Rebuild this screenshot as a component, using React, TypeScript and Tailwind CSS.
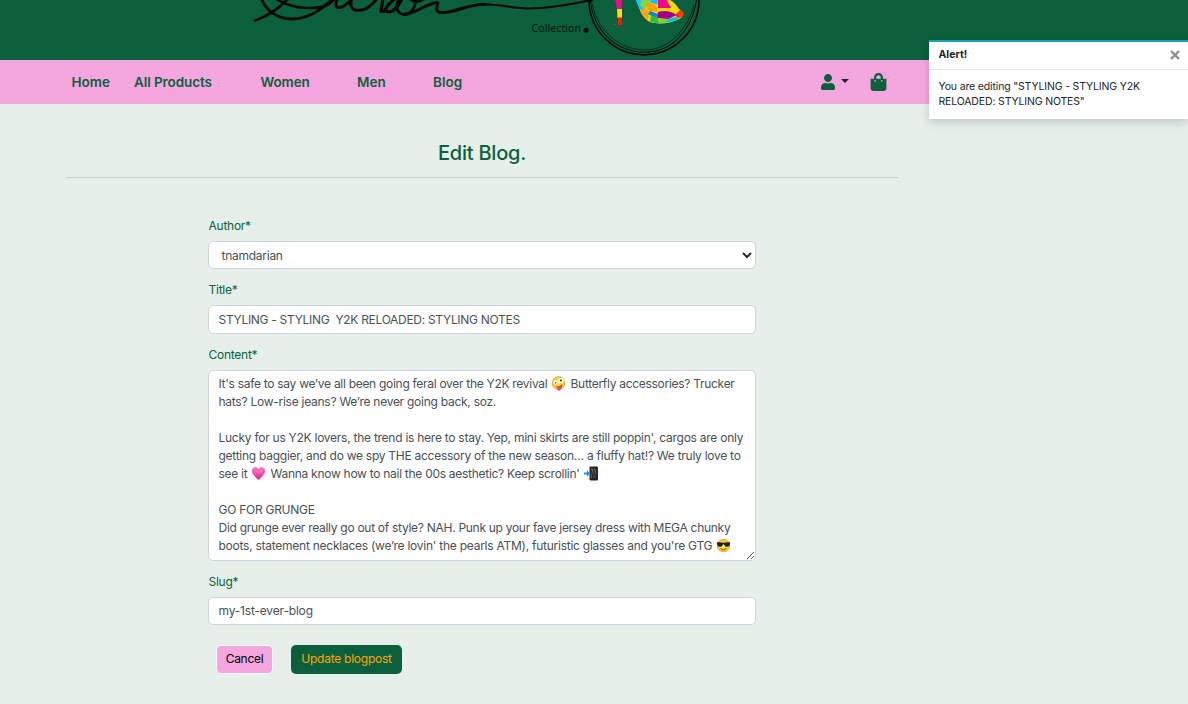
import React from "react";
import { FaUser, FaShoppingBag } from "react-icons/fa";

function Logo() {
  return (
    <svg width="460" height="60" viewBox="250 0 460 60" className="block" fill="none" stroke="#050805" strokeLinecap="round" strokeLinejoin="round">
      <path d="M255 20.500C266 17 277 10 288-1M261-2C266 11 278 19 292 19C308 19 321 11 334-3" strokeWidth="2.800" />
      <path d="M275-2C285 5 297 8 309 8C322 8 330 6 336-3" strokeWidth="2.700" />
      <path d="M338-2C334 5 336 8 340 7.500C345 7 349 2 352-2C349 6 352 10.500 358 10.500C367 10.500 374 3 378-3" strokeWidth="3" />
      <path d="M383-2L381 11.500M384 11.500C387 6 391 1 396-2C386 5 383 12 389 12C395 12 399 4 402-1" strokeWidth="3.200" />
      <path d="M399-2C395 7 397 14.500 405 14.500C412 14 417 5 415-2M410-1C414 3 420 2 424-1" strokeWidth="2.800" />
      <path d="M405 14C417 13 423 5 437 2.500C441 2 431 12 442 12.500C455 13 468 4.500 485 4.200" strokeWidth="2.800" />
      <path d="M448 12C461 8 470 4.500 484 4.200C502 4.500 514 8.500 531 8.500C555 8 570 4 592 0" strokeWidth="2.100" />
      <circle cx="644" cy="-.2" r="55" strokeWidth="1.700" />
      <path d="M590-2C593 31 616 52.200 645 52.200C673 52.200 693 29 697-3" strokeWidth="1" />
      <path d="M591-2C596 32 620 50 646 50C671 49 688 28 694 5" strokeWidth=".6" />
      <circle cx="586" cy="30.200" r="2.500" fill="#050805" stroke="none" />
      <text x="531.500" y="31.500" textLength="49.500" fontSize="10.500" fontFamily="'Noto Sans', sans-serif" fill="#07150e" stroke="none">Collection</text>
      <g stroke="none">
        <path d="M615-1H622V9H617Z" fill="#f0078c" />
        <path d="M617 9H622V18H617.500Z" fill="#ffdf00" />
        <path d="M617.500 17.500H622L621.500 25H618Z" fill="#f21b08" />
        <path d="M636-1C639 9 643 19 650 22C659 25.500 676 22 682 17C685 12 682 12 679 9C676 4 672 0 667-1Z" fill="#ffd800" />
        <path d="M635-1H642L641 5L646 10L641 11Z" fill="#14c4fb" />
        <path d="M642-1H650L648 6L644 9L640 4Z" fill="#86d23f" />
        <path d="M640 10L646 8L649 12L648 20Q642 17 640 10Z" fill="#ffa61c" />
        <path d="M649 2Q656 4 658 12L650 11L646 6Z" fill="#ffa000" />
        <path d="M650-1H658L657 5L650 2Z" fill="#13c4ef" />
        <path d="M650 11L658 14L656 18L648 14Z" fill="#0587d4" />
        <path d="M658-1H666L671 8L658 8Z" fill="#f0078c" />
        <path d="M658 12Q667 9 677 15L668 19L657 18Z" fill="#a0008d" />
        <path d="M651 15L658 18L659 23.500Q654 23 650 21.500Z" fill="#25bd50" />
        <path d="M659 19L668 19L678 19Q670 24 659 23.500Z" fill="#7dce42" />
        <path d="M668 19L679 16L677 20Q672 22 667 22Z" fill="#15b9ed" />
        <path d="M675 15L680 10L684 13L682 17L678 18Z" fill="#f33710" />
      </g>
    </svg>
  );
}

function Emoji({ kind }: { kind: "zany" | "heart" | "phone" | "cool" }) {
  return (
    <svg width="15" height="15" viewBox="0 0 15 15" className="mx-px inline-block align-[-3px]">
      <defs>
        <radialGradient id="face"><stop stopColor="#ffe74d" /><stop offset=".7" stopColor="#ffd33a" /><stop offset="1" stopColor="#eba023" /></radialGradient>
        <linearGradient id="pink" x2="0" y2="1"><stop stopColor="#ff9cd0" /><stop offset="1" stopColor="#df1185" /></linearGradient>
      </defs>
      {kind === "zany" && <g><circle cx="7.5" cy="7" r="6.700" fill="url(#face)" /><circle cx="4.500" cy="6.500" r="2" fill="#fff" /><circle cx="10" cy="4.500" r="2.700" fill="#fff" /><circle cx="4.600" cy="6.800" r=".8" fill="#543310" /><circle cx="10" cy="4.500" r="1.100" fill="#543310" /><path d="M4.500 10Q9 11 11.500 8Q11 12 8 12Z" fill="#69350b" /><path d="M5.500 10.500Q8.500 9.500 10.500 11Q10.500 14.200 7.500 15Q5.500 13 5.500 10.500Z" fill="#f44c7a" /></g>}
      {kind === "heart" && <g><path d="M7.500 14C4 10.500.7 8 .7 4.500C.7.800 5.500-.3 7.500 3C9.500-.3 14.300.8 14.300 4.500C14.300 8 11 10.500 7.500 14Z" fill="url(#pink)" /><path d="M3 7C1 2 6 1 7.500 5C9 1 14 2 12 7" fill="none" stroke="#f04da8" strokeWidth="1" /></g>}
      {kind === "phone" && <g><rect x="5.500" y=".5" width="8.500" height="14" rx="1" fill="#222629" /><path d="M7 2.500H12.500V12H7Z" fill="#303236" /><path d="M7 3H8M10 3H11M8 6H9M11 7H12M7 9H8M10 11H11" stroke="#eb5144" /><path d="M8 4H9M11 5H12M7 11H8" stroke="#4ac776" /><path d="M0 6.500H3V4.500L6.500 7.500L3 10.500V8.500H0Z" fill="#1792f4" /></g>}
      {kind === "cool" && <g><circle cx="7.500" cy="7.500" r="6.700" fill="url(#face)" /><path d="M.6 4.500Q4 3.800 7.500 4.800Q11 3.800 14.400 4.500L13.500 7.500Q12 9.500 9.500 8.500L7.500 6L5.500 8.500Q3 9.500 1.500 7.500Z" fill="#18232a" /><path d="M4.500 10.500Q7.500 13 10.500 10.500" stroke="#8b4d12" strokeWidth="1" fill="none" /></g>}
    </svg>
  );
}

const field = "rounded-[5px] border border-[#ced4da] bg-white text-[#495057]";
const label = "block h-[18px] pl-[0.5px] text-[12px] leading-[18px] tracking-[-0.25px] text-[#0c5f3b]";

export default function App() {
  return (
    <div className="relative h-[704px] w-[1188px] overflow-hidden bg-[#e6efea] font-['Inter',sans-serif] text-[12px]">
      <header className="h-[60px] bg-[#0c5f3b] pl-[250px]"><Logo /></header>
      <nav className="flex h-11 items-center bg-[#f4a6de] pl-[71.5px] text-[13.5px] font-semibold text-[#0c5f3b]">
        <a className="w-[62.5px] whitespace-nowrap">Home</a>
        <a className="w-[126.5px] tracking-[-0.08px] whitespace-nowrap">All Products</a>
        <a className="w-[96.5px] tracking-[-0.1px]">Women</a>
        <a className="w-[76px]">Men</a>
        <a className="w-[388px]">Blog</a>
        <FaUser className="h-4 w-[14px]" />
        <svg width="8" height="4" viewBox="0 0 8 4" className="mb-[2px] ml-[6px]"><path d="M0 0H8L4 4Z" fill="#212529" /></svg>
        <FaShoppingBag className="ml-[21px] h-[18px] w-[17px]" />
      </nav>

      <main className="ml-[66px] w-[832px]">
        <h1 className="flex h-[74px] items-end justify-center border-b border-[#cad2cd] pb-[9px] text-[20px] leading-[30px] font-medium tracking-[-0.22px] text-[#0c5f3b]">Edit Blog.</h1>
        <form className="ml-[142px] w-[548px] pt-[39px]">
          <label className={label}>Author*</label>
          <div className={`${field} mt-[6px] flex h-7 items-center justify-between pr-[3px] pl-3`}>
            <span className="pt-[2px] pl-[0.5px] tracking-[-0.26px]">tnamdarian</span>
            <svg width="10" height="7" viewBox="0 0 10 7" fill="none" stroke="#242a2d" strokeWidth="2"><path d="M1 1L5 5L9 1" /></svg>
          </div>
          <label className={`${label} mt-3`}>Title*</label>
          <div className={`${field} mt-[6px] flex h-[29px] items-center pl-[9.5px] tracking-[-0.3px] whitespace-pre`}>STYLING - STYLING  Y2K RELOADED: STYLING NOTES</div>
          <label className={`${label} mt-3`}>Content*</label>
          <div className={`${field} relative mt-[6px] h-[191px] pt-[4px] pl-[9.5px] leading-[18px] whitespace-pre`}>
            <p className="h-[18px] tracking-[-0.29px]">It's safe to say we’ve all been going feral over the Y2K revival <Emoji kind="zany" /> Butterfly accessories? Trucker</p>
            <p className="h-[36px] tracking-[-0.26px]">hats? Low-rise jeans? We’re never going back, soz.</p>
            <p className="h-[18px] tracking-[-0.255px]">Lucky for us Y2K lovers, the trend is here to stay. Yep, mini skirts are still poppin', cargos are only</p>
            <p className="h-[18px] tracking-[-0.265px]">getting baggier, and do we spy THE accessory of the new season… a fluffy hat!? We truly love to</p>
            <p className="h-[36px] tracking-[-0.28px]">see it <Emoji kind="heart" /> Wanna know how to nail the 00s aesthetic? Keep scrollin' <Emoji kind="phone" /></p>
            <p className="h-[18px] tracking-[-0.27px]">GO FOR GRUNGE</p>
            <p className="h-[18px] tracking-[-0.285px]">Did grunge ever really go out of style? NAH. Punk up your fave jersey dress with MEGA chunky</p>
            <p className="h-[18px] tracking-[-0.25px]">boots, statement necklaces (we’re lovin' the pearls ATM), futuristic glasses and you're GTG <Emoji kind="cool" /></p>
            <svg className="absolute right-0 bottom-0" width="9" height="9" stroke="#555" strokeWidth="1"><path d="M1 8L8 1M5 8L8 5" /></svg>
          </div>
          <label className={`${label} mt-3`}>Slug*</label>
          <div className={`${field} mt-[6px] flex h-7 items-center pl-[9.5px] tracking-[-0.18px]`}>my-1st-ever-blog</div>
          <div className="mt-5 flex items-center pl-2">
            <button type="button" className="h-[29px] w-[57px] rounded-[5px] border border-[#f8f9fa] bg-[#f4a6de] pb-[2px] tracking-[-0.3px] text-black">Cancel</button>
            <button type="button" className="ml-[18px] h-[29px] w-[111px] rounded-[5px] bg-[#0c5f3b] pb-[2px] tracking-[-0.25px] text-[#ffa500]">Update blogpost</button>
          </div>
        </form>
      </main>

      <aside className="absolute top-10 left-[929px] h-[79px] w-[259px] border-t-2 border-[#17a2b8] bg-white text-[10.5px] text-[#212529] shadow-[0_3px_9px_rgba(0,0,0,.16)]">
        <div className="flex h-7 items-center justify-between border-b border-[#e2e5e8] pr-[8px] pl-[9.5px] font-bold">
          <span className="pb-[2px]">Alert!</span>
          <svg width="10" height="10" viewBox="0 0 10 10" stroke="#8b8e90" strokeWidth="2.4" className="mb-px"><path d="M1 1L9 9M9 1L1 9" /></svg>
        </div>
        <p className="pt-[9px] pl-[9.5px] leading-[15px] tracking-[-0.15px] whitespace-pre">You are editing "STYLING - STYLING Y2K{"\n"}RELOADED: STYLING NOTES"</p>
      </aside>
    </div>
  );
}
